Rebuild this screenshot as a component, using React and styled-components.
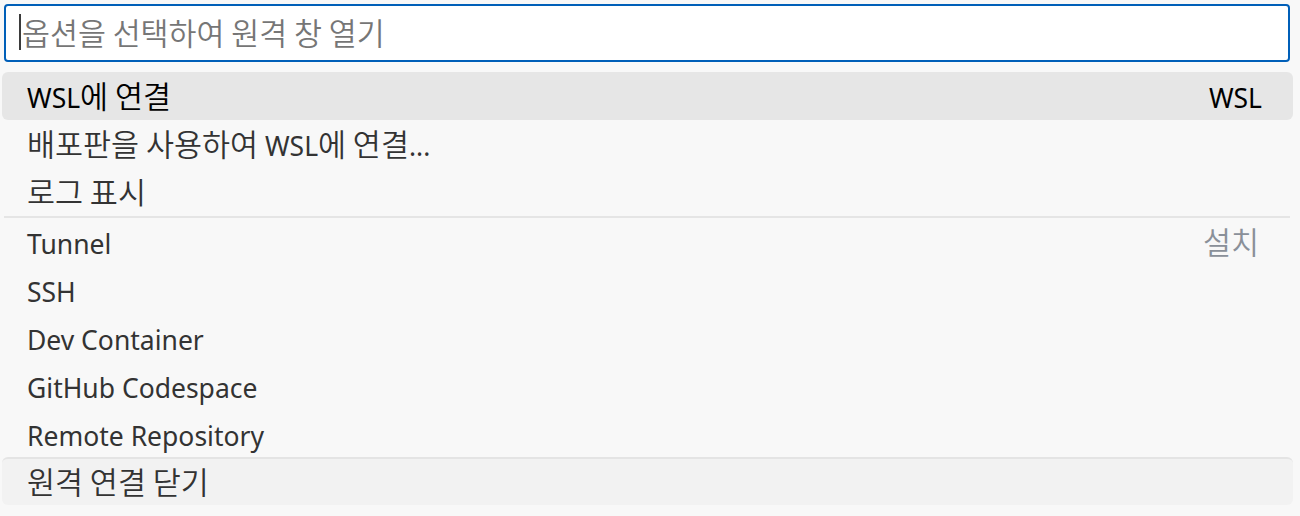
import React from "react";
import styled, { createGlobalStyle } from "styled-components";

const Global = createGlobalStyle`
  html, body { margin: 0; padding: 0; background: #f8f8f8; }
  body { font-family: "Noto Sans", "Noto Sans CJK KR", sans-serif; }
`;

const Widget = styled.div`
  width: 1300px;
  height: 516px;
  box-sizing: border-box;
  padding-top: 4px;
  background: #f8f8f8;
  display: flex;
  flex-direction: column;
`;

const InputWrap = styled.div`
  position: relative;
  margin: 0 10px 0 4px;
  height: 58px;
  box-sizing: border-box;
  border: 2px solid #005fb8;
  border-radius: 4px;
  background: #ffffff;
  display: flex;
  align-items: center;
  padding-left: 16px;
`;

const Input = styled.input`
  flex: 1;
  border: none;
  outline: none;
  background: transparent;
  font-family: "Noto Sans CJK KR", "Noto Sans", sans-serif;
  font-weight: 350;
  font-size: 30.4px;
  color: #3b3b3b;
  padding: 0 0 3px 0;
  caret-color: transparent;
  &::placeholder { color: #767676; }
`;

const Caret = styled.span`
  position: absolute;
  left: 13px;
  top: 8px;
  width: 2px;
  height: 36px;
  background: #3b3b3b;
`;

const List = styled.div`
  margin: 10px 7px 0 2px;
  display: flex;
  flex-direction: column;
`;

const Row = styled.div`
  height: 48px;
  box-sizing: border-box;
  display: flex;
  align-items: center;
  justify-content: space-between;
  padding: 4px 31px 0 25px;
  border-radius: 6px;
  font-size: 26.5px;
  line-height: 36px;
  color: ${p => (p.$active ? "#000000" : "#333333")};
  background: ${p => (p.$active ? "#e6e6e6" : p.$footer ? "#f2f2f2" : "transparent")};
  ${p => p.$footer && "border-top: 2px solid #e4e4e4; margin-top: -1px;"}
`;

const Label = styled.span`
  white-space: nowrap;
`;

const Desc = styled.span`
  white-space: nowrap;
  color: ${p => (p.$muted ? "#8a9099" : "inherit")};
  margin-right: ${p => (p.$muted ? "3px" : "0")};
`;

const Hangul = styled.span`
  font-family: "Noto Sans CJK KR", sans-serif;
  font-weight: 350;
  font-size: 1.15em;
  line-height: 1;
`;

const Separator = styled.div`
  height: 2px;
  margin: 0 3px 0 2px;
  background: #e5e5e5;
`;

const HANGUL_RUN = /([\uAC00-\uD7A3\u3131-\u318E]+(?:\s+[\uAC00-\uD7A3\u3131-\u318E]+)*)/;

function Text({ children }) {
  const parts = String(children).split(HANGUL_RUN);
  return parts.map((part, i) =>
    i % 2 === 1 ? <Hangul key={i}>{part}</Hangul> : part
  );
}

const groups = [
  [
    { label: "WSL에 연결", desc: "WSL", active: true },
    { label: "배포판을 사용하여 WSL에 연결..." },
    { label: "로그 표시" },
  ],
  [
    { label: "Tunnel", desc: "설치", muted: true },
    { label: "SSH" },
    { label: "Dev Container" },
    { label: "GitHub Codespace" },
    { label: "Remote Repository" },
  ],
];

export default function App() {
  return (
    <>
      <Global />
      <Widget>
        <InputWrap>
          <Caret />
          <Input placeholder="옵션을 선택하여 원격 창 열기" />
        </InputWrap>
        <List>
          {groups.map((g, gi) => (
            <React.Fragment key={gi}>
              {gi > 0 && <Separator />}
              {g.map((it) => (
                <Row key={it.label} $active={it.active}>
                  <Label><Text>{it.label}</Text></Label>
                  {it.desc && (
                    <Desc $muted={it.muted}><Text>{it.desc}</Text></Desc>
                  )}
                </Row>
              ))}
            </React.Fragment>
          ))}
          <Row $footer>
            <Label><Text>원격 연결 닫기</Text></Label>
          </Row>
        </List>
      </Widget>
    </>
  );
}
